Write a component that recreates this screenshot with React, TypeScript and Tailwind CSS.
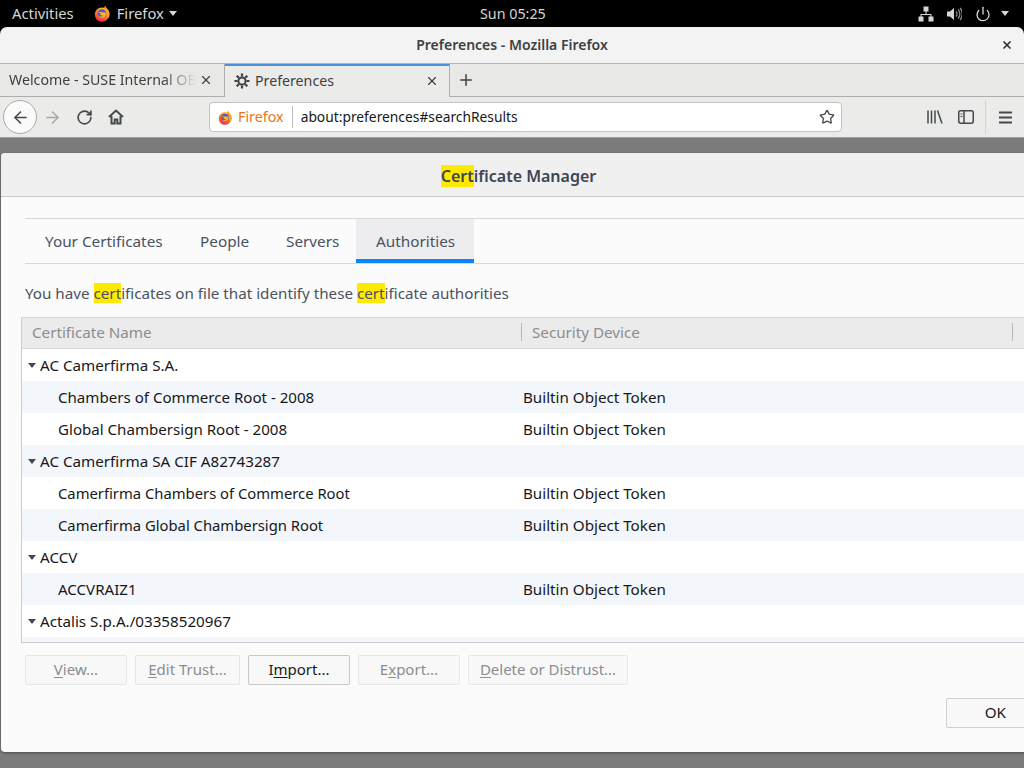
import React from 'react';
import { X, Plus, ArrowLeft, ArrowRight, RotateCw, Star, Power } from 'lucide-react';

function FirefoxLogo({ size = 16 }: { size?: number }) {
  return (
    <svg width={size} height={size} viewBox="0 0 32 32">
      <defs>
        <linearGradient id="ffo" x1="0.7" y1="0" x2="0.3" y2="1">
          <stop offset="0" stopColor="#ffcb2e" />
          <stop offset="0.5" stopColor="#ff7a1f" />
          <stop offset="1" stopColor="#f5233f" />
        </linearGradient>
      </defs>
      <circle cx="15" cy="18" r="13.5" fill="url(#ffo)" />
      <path d="M21 1c1 4 5 6 7 10 2 5 2 10-1 14l-5-9c-1-3-3-4-3-8 0-3 1-5 2-7z" fill="#ffa01f" />
      <circle cx="15" cy="16" r="8" fill="#4b57d6" />
      <path d="M8 14c3-2 6-1 8 0l6 0c1 6-2 10-7 10-3 0-5-1-6-3 3 1 7 1 8-1-3 0-5-1-6-3l3-1-5-2z" fill="#ffb52a" />
    </svg>
  );
}

function Gear() {
  return (
    <svg width="16" height="16" viewBox="0 0 16 16" className="text-[#3d4145]">
      <circle cx="8" cy="8" r="3.6" fill="none" stroke="currentColor" strokeWidth="2" />
      <g stroke="currentColor" strokeWidth="2.2">
        <path d="M8 0.5v3M8 12.5v3M0.5 8h3M12.5 8h3M2.7 2.7l2.1 2.1M11.2 11.2l2.1 2.1M2.7 13.3l2.1-2.1M11.2 4.8l2.1-2.1" />
      </g>
    </svg>
  );
}

function HomeIcon() {
  return (
    <svg width="16" height="16" viewBox="0 0 16 16" fill="none" stroke="#45494d" strokeWidth="2">
      <path d="M1 8l7-6.5L15 8" />
      <path d="M3.5 7v7.5h3.2v-4h2.6v4h3.2V7" />
    </svg>
  );
}

function NetworkIcon() {
  return (
    <svg width="16" height="16" viewBox="0 0 16 16" fill="#d6d6d6">
      <rect x="5.5" y="0.5" width="5" height="5" />
      <rect x="0.5" y="10.5" width="5" height="5" />
      <rect x="10.5" y="10.5" width="5" height="5" />
      <path d="M7.5 5h1v3h5v3h-1V9H3.5v2h-1V8h5z" />
    </svg>
  );
}

function VolumeIcon() {
  return (
    <svg width="16" height="16" viewBox="0 0 16 16" fill="none">
      <path d="M1 5.5h3L8 2v12L4 10.5H1z" fill="#d6d6d6" />
      <path d="M10 5.5a3.5 3.5 0 0 1 0 5M12 3.5a6.5 6.5 0 0 1 0 9M14 2a9 9 0 0 1 0 12" stroke="#8a8a8a" strokeWidth="1.3" />
    </svg>
  );
}

function LibraryIcon() {
  return (
    <svg width="16" height="14" viewBox="0 0 16 14" stroke="#45494d" strokeWidth="1.5" fill="none">
      <path d="M1 0.5v13M4.5 0.5v13M8 0.5v13M10.5 0.5l4.5 13" />
    </svg>
  );
}

function SidebarIcon() {
  return (
    <svg width="16" height="14" viewBox="0 0 16 14" fill="none" stroke="#45494d" strokeWidth="1.5">
      <rect x="0.75" y="0.75" width="14.5" height="12.5" rx="2" />
      <path d="M6 1v12" strokeWidth="1.5" />
      <path d="M2.5 4h2M2.5 6.5h2" strokeWidth="1" />
    </svg>
  );
}

function MenuBars() {
  return (
    <svg width="13" height="13" viewBox="0 0 13 13" stroke="#45494d" strokeWidth="2">
      <path d="M0 1.5h13M0 6.5h13M0 11.5h13" />
    </svg>
  );
}

function Hl({ children }: { children: React.ReactNode }) {
  return <span className="bg-[#ffe900]">{children}</span>;
}

function Caret() {
  return <span className="w-0 h-0 border-x-[4.5px] border-x-transparent border-t-[5px] border-t-[#45494d] mt-[1px]" />;
}

type Row = { name: string; group?: boolean; narrow?: boolean };

const rows: Row[] = [
  { name: 'AC Camerfirma S.A.', group: true },
  { name: 'Chambers of Commerce Root - 2008' },
  { name: 'Global Chambersign Root - 2008' },
  { name: 'AC Camerfirma SA CIF A82743287', group: true },
  { name: 'Camerfirma Chambers of Commerce Root', narrow: true },
  { name: 'Camerfirma Global Chambersign Root', narrow: true },
  { name: 'ACCV', group: true },
  { name: 'ACCVRAIZ1' },
  { name: 'Actalis S.p.A./03358520967', group: true },
  { name: '' },
];

function DialogButton({ label, u, rest, width, enabled }: { label?: string; u: string; rest: string; width: string; enabled?: boolean }) {
  return (
    <button className={`${width} h-[30px] pb-[2px] border rounded-[2px] bg-[#f8f8f8] ${enabled ? 'border-[#c8c8c8] text-[#181a1b]' : 'border-[#e6e6e6] text-[#8b8d90]'}`}>
      {label}
      <span className="underline underline-offset-2">{u}</span>
      {rest}
    </button>
  );
}

export default function App() {
  return (
    <div className="w-[1024px] h-[768px] overflow-hidden bg-black flex flex-col font-['Noto_Sans',sans-serif] text-[15.2px]">
      {/* gnome top bar */}
      <div className="h-[27px] shrink-0 flex items-center justify-between text-[#d6d6d6] text-[14.8px] pl-3 pr-[15px] relative">
        <div className="flex items-center">
          <span>Activities</span>
          <span className="ml-[20px]"><FirefoxLogo size={17} /></span>
          <span className="ml-[6px]">Firefox</span>
          <span className="ml-[5px] w-0 h-0 border-x-[4.5px] border-x-transparent border-t-[5px] border-t-[#d6d6d6]" />
        </div>
        <span className="absolute left-[480px] text-[14.3px]">Sun 05:25</span>
        <div className="flex items-center">
          <NetworkIcon />
          <span className="ml-[12px]"><VolumeIcon /></span>
          <Power className="ml-[13px] w-[16px] h-[16px]" strokeWidth={2} />
          <span className="ml-[10px] w-0 h-0 border-x-[4.5px] border-x-transparent border-t-[5px] border-t-[#d6d6d6]" />
        </div>
      </div>

      {/* title bar */}
      <div className="h-[37px] shrink-0 bg-[#f3f3f3] rounded-t-[7px] border-b border-[#b5b5b3] flex items-center justify-center pb-px relative">
        <span className="font-semibold text-[#3d3f42] text-[14px]">Preferences - Mozilla Firefox</span>
        <X className="absolute right-[11px] top-[12px] w-[12px] h-[12px] text-[#2e3436]" strokeWidth={3.5} />
      </div>

      {/* tabs */}
      <div className="h-[33px] shrink-0 bg-[#e8e8e7] border-b border-[#aeaeac] flex text-[#3d3f42] text-[14.2px]">
        <div className="w-[225px] flex items-center pl-[9px] pr-[9px] border-r border-[#aeaeac]">
          <span className="w-[187px] whitespace-nowrap overflow-hidden [mask-image:linear-gradient(to_right,black_82%,transparent)]">Welcome - SUSE Internal OB</span>
          <X className="w-[14px] h-[14px] ml-[3px]" strokeWidth={2} />
        </div>
        <div className="w-[225px] -mb-px bg-[#ebebea] border-t-2 border-t-[#4a90d9] border-r border-r-[#aeaeac] flex items-center pl-[9px] pr-[10px] pb-[2px]">
          <Gear />
          <span className="ml-[5px] flex-1">Preferences</span>
          <X className="w-[14px] h-[14px]" strokeWidth={2} />
        </div>
        <div className="w-[31px] flex items-center justify-center">
          <Plus className="w-[18px] h-[18px] text-[#3d3f42]" strokeWidth={2} />
        </div>
      </div>

      {/* nav toolbar */}
      <div className="h-[41px] shrink-0 bg-[#ebebea] border-b border-[#a0a09e] flex items-center">
        <div className="ml-[3px] w-[34px] h-[34px] rounded-full bg-[#fbfbfb] border border-[#a9a9a9] flex items-center justify-center">
          <ArrowLeft className="w-[19px] h-[19px] text-[#45494d]" strokeWidth={2} />
        </div>
        <ArrowRight className="ml-[6px] w-[19px] h-[19px] text-[#a9a9a9]" strokeWidth={2} />
        <RotateCw className="ml-[14px] w-[17px] h-[17px] text-[#45494d]" strokeWidth={2.4} />
        <span className="ml-[15px]"><HomeIcon /></span>
        <div className="ml-[85px] w-[633px] h-[30px] bg-white border border-[#c3c3c1] rounded-[4px] flex items-center pl-[8px] pr-[6px]">
          <FirefoxLogo size={15} />
          <span className="ml-[5px] text-[#e8751a] text-[14.3px]">Firefox</span>
          <span className="ml-[8px] h-[22px] border-l border-[#bdbdbb]" />
          <span className="ml-[8px] flex-1 text-[#17181a] text-[13.8px]">about:preferences#searchResults</span>
          <Star className="w-[16px] h-[16px] text-[#45494d]" strokeWidth={2} />
        </div>
        <span className="ml-[85px]"><LibraryIcon /></span>
        <span className="ml-[15px]"><SidebarIcon /></span>
        <span className="ml-[11px] h-[34px] border-l border-[#d3d3d1]" />
        <span className="ml-[13px] flex"><MenuBars /></span>
      </div>

      {/* dimmed page with dialog */}
      <div className="flex-1 bg-[#7b7b7b] pt-[15px] pl-px overflow-hidden">
        <div className="w-[1040px] h-[599px] rounded-[4px] bg-[#fbfbfb] flex flex-col shadow-[0_1px_3px_rgba(0,0,0,0.4)]">
          <div className="h-[44px] shrink-0 bg-[#f0f0f0] border-b border-[#c8c8c8] rounded-t-[4px] flex items-center justify-center pr-[5px] pt-[2px]">
            <span className="font-semibold text-[#3d4553] text-[16px]"><Hl>Cert</Hl>ificate Manager</span>
          </div>

          <div className="pl-[24px] pt-[21px]">
            <div className="h-[46px] w-[1015px] border-y border-[#d7d7db] flex text-[#4a5260] text-[15.3px]">
              <span className="px-[20px] pt-px flex items-center w-[157px] whitespace-nowrap">Your Certificates</span>
              <span className="px-[18px] pt-px flex items-center w-[85px]">People</span>
              <span className="px-[19px] pt-px flex items-center w-[89px]">Servers</span>
              <span className="px-[20px] flex items-center bg-[#ededf0] border-b-[4px] border-[#0a84ff] pt-[5px] w-[118px]">Authorities</span>
            </div>

            <div className="mt-[18px] mb-[1px] h-[22px] flex items-center text-[#4a5260]">
              <span>You have <Hl>cert</Hl>ificates on file that identify these <Hl>cert</Hl>ificate authorities</span>
            </div>
          </div>

          <div className="ml-[20px] mt-[12px] w-[1010px] h-[326px] shrink-0 border-l border-b border-[#cdcdd1] overflow-hidden">
            <div className="h-[32px] pb-[2px] bg-[#ebebeb] border-t border-b border-[#d7d7db] flex items-center text-[#8b8d90]">
              <span className="w-[500px] pl-[10px] border-r border-[#b8b8b8] h-[18px] leading-[18px]">Certificate Name</span>
              <span className="w-[491px] pl-[10px] border-r border-[#b8b8b8] h-[18px] leading-[18px]">Security Device</span>
            </div>
            {rows.map((r, i) => (
              <div key={i} className={`h-[32px] flex items-center text-[#17181a] ${i % 2 === 1 ? 'bg-[#f3f6fa]' : 'bg-white'}`}>
                <div className="w-[501px] flex items-center">
                  {r.group ? (
                    <span className="flex items-center pl-[6px] gap-[4px]"><Caret />{r.name}</span>
                  ) : (
                    <span className={`pl-[36px] ${r.narrow ? 'text-[14.8px]' : 'text-[15.1px]'}`}>{r.name}</span>
                  )}
                </div>
                {!r.group && r.name && <span>Builtin Object Token</span>}
              </div>
            ))}
          </div>

          <div className="ml-[24px] mt-[12px] flex gap-[8px] text-[15px]">
            <DialogButton u="V" rest="iew..." width="w-[102px]" />
            <DialogButton u="E" rest="dit Trust..." width="w-[105px]" />
            <DialogButton label="I" u="m" rest="port..." width="w-[102px]" enabled />
            <DialogButton label="E" u="x" rest="port..." width="w-[102px]" />
            <DialogButton u="D" rest="elete or Distrust..." width="w-[160px]" />
          </div>

          <div className="ml-[945px] mt-[13px]">
            <button className="w-[95px] h-[30px] pb-[2px] border border-[#d0d0d0] rounded-[2px] bg-[#f8f8f8] text-[#17181a] pr-[34px] text-right">OK</button>
          </div>
        </div>
      </div>
    </div>
  );
}
